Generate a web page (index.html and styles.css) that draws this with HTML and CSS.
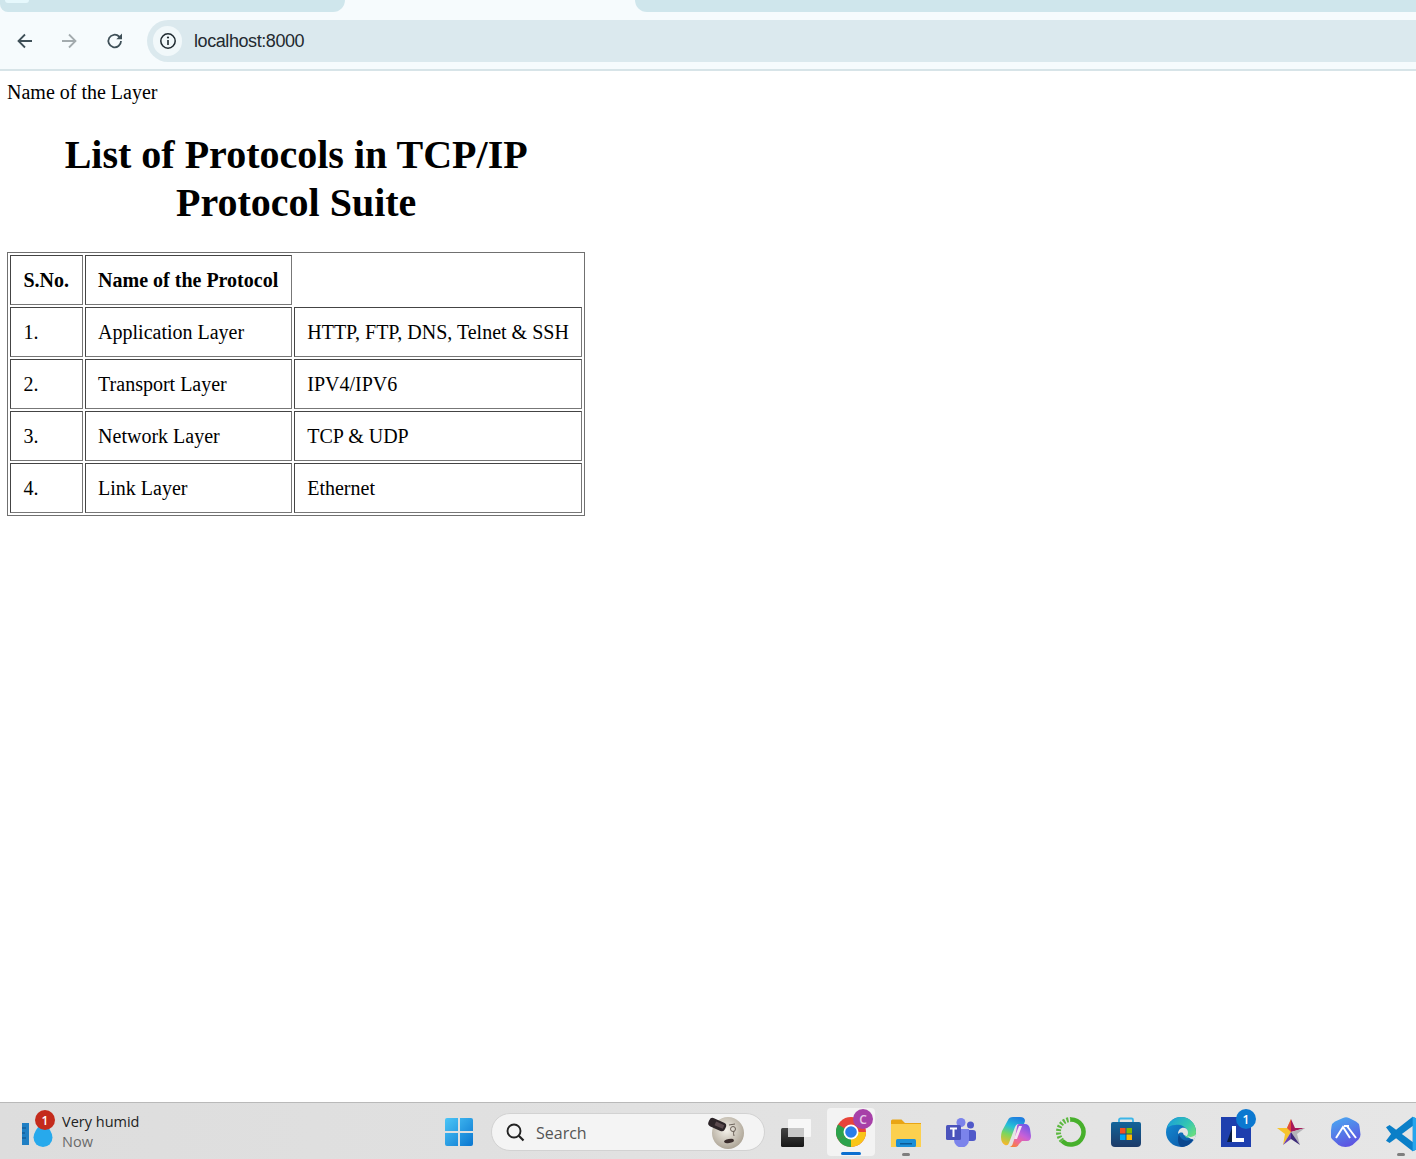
FILE: index.html
```html
<!DOCTYPE html>
<html lang="en">
<head>
    <meta charset="UTF-8">
    <title>List of Protocols</title>
    <link rel="stylesheet" href="styles.css">
</head>
<body>
    <div class="tabstrip">
        <div class="tab tab-left"><span class="tab-icon"></span></div>
        <div class="tab-active"></div>
        <div class="tab tab-right"></div>
    </div>
    <div class="toolbar">
        <button class="nav-button">
            <svg width="20" height="20" viewBox="0 0 20 20"><path d="M17 10H4M10 3.500L3.500 10l6.500 6.500" fill="none" stroke="#3f5058" stroke-width="1.800"/></svg>
        </button>
        <button class="nav-button">
            <svg width="20" height="20" viewBox="0 0 20 20"><path d="M3 10h13M10 3.500l6.500 6.500-6.500 6.500" fill="none" stroke="#a3abae" stroke-width="1.800"/></svg>
        </button>
        <button class="nav-button">
            <svg width="20" height="20" viewBox="0 0 20 20"><path d="M16 10a6.300 6.300 0 1 1-1.900-4.500L16 7.200" fill="none" stroke="#3f5058" stroke-width="1.800"/><path d="M17 2.500V8.200h-5.700z" fill="#3f5058"/></svg>
        </button>
        <div class="address-bar">
            <span class="site-chip">
                <svg width="18" height="18" viewBox="0 0 18 18"><circle cx="9" cy="9" r="7.200" fill="none" stroke="#1f2a30" stroke-width="1.500"/><path d="M9 8v5" stroke="#1f2a30" stroke-width="1.600"/><circle cx="9" cy="5.500" r="1.100" fill="#1f2a30"/></svg>
            </span>
            <span class="url">localhost:8000</span>
        </div>
    </div>

    <div class="page">
        <div class="layer-name">Name of the Layer</div>
        <table class="protocols">
            <caption><h1>List of Protocols in TCP/IP Protocol Suite</h1></caption>
            <tr>
                <th>S.No.</th>
                <th>Name of the Protocol</th>
            </tr>
            <tr>
                <td>1.</td>
                <td>Application Layer</td>
                <td>HTTP, FTP, DNS, Telnet &amp; SSH</td>
            </tr>
            <tr>
                <td>2.</td>
                <td>Transport Layer</td>
                <td>IPV4/IPV6</td>
            </tr>
            <tr>
                <td>3.</td>
                <td>Network Layer</td>
                <td>TCP &amp; UDP</td>
            </tr>
            <tr>
                <td>4.</td>
                <td>Link Layer</td>
                <td>Ethernet</td>
            </tr>
        </table>
    </div>

    <div class="taskbar">
        <div class="weather">
            <svg class="weather-icon" width="32" height="28" viewBox="0 0 32 28">
                <rect x="0" y="3" width="7" height="22" fill="#1f7fc4"/>
                <path d="M0 8h4M0 13h3M0 18h4" stroke="#0f4f86" stroke-width="1"/>
                <path d="M21 2q9 8 9.500 15.500a9.500 9.500 0 0 1-19 0Q12 10 21 2z" fill="#27a9ec"/>
            </svg>
            <span class="badge badge-red">1</span>
            <div class="weather-text">
                <div class="weather-title">Very humid</div>
                <div class="weather-time">Now</div>
            </div>
        </div>

        <div class="task-icon start-icon">
            <svg width="30" height="30" viewBox="0 0 30 30">
                <defs>
                    <linearGradient id="winBlue" x1="0" y1="0" x2="1" y2="1"><stop offset="0" stop-color="#4cc6f7"/><stop offset="1" stop-color="#0a76d0"/></linearGradient>
                </defs>
                <path d="M1 3a2 2 0 0 1 2-2h11v13H1zM16 1h11a2 2 0 0 1 2 2v11H16zM1 16h13v13H3a2 2 0 0 1-2-2zM16 16h13v11a2 2 0 0 1-2 2H16z" fill="url(#winBlue)"/>
            </svg>
        </div>

        <div class="search-box">
            <svg width="22" height="22" viewBox="0 0 22 22"><circle cx="10" cy="10" r="6.500" fill="none" stroke="#222" stroke-width="1.900"/><path d="M14.800 14.800l4.700 4.700" stroke="#222" stroke-width="2.200"/></svg>
            <span class="search-text">Search</span>
            <svg class="search-art" width="38" height="34" viewBox="0 0 38 34">
                <defs>
                    <radialGradient id="moon" cx="0.450" cy="0.400" r="0.650"><stop offset="0" stop-color="#f6f3ec"/><stop offset="1" stop-color="#a89f90"/></radialGradient>
                </defs>
                <circle cx="21" cy="18" r="16" fill="url(#moon)"/>
                <rect x="1" y="5" width="18" height="9" rx="3.500" transform="rotate(24 10 10)" fill="#2c2428"/>
                <rect x="8" y="8" width="9" height="4" transform="rotate(24 12 10)" fill="#5a4a4e"/>
                <circle cx="26" cy="14" r="2.500" fill="none" stroke="#6a6058" stroke-width="1"/>
                <path d="M22 10l6-1M27 21q-1-3 0-5" fill="none" stroke="#6a6058" stroke-width="1"/>
                <ellipse cx="22" cy="26" rx="5" ry="2" transform="rotate(-10 22 26)" fill="#3a2d2c"/>
            </svg>
        </div>

        <div class="task-icon">
            <svg width="30" height="30" viewBox="0 0 30 30">
                <defs>
                    <linearGradient id="viewFront" x1="0" y1="0" x2="0" y2="1"><stop offset="0" stop-color="#444"/><stop offset="1" stop-color="#161616"/></linearGradient>
                </defs>
                <rect x="7" y="2" width="23" height="18" rx="1" fill="#f7f7f7"/>
                <rect x="0" y="11" width="23" height="19" rx="1.500" fill="url(#viewFront)"/>
                <rect x="7" y="11" width="16" height="9" fill="#c8c8c8"/>
            </svg>
        </div>

        <div class="task-icon chrome-tile">
            <svg width="30" height="30" viewBox="0 0 30 30">
                <circle cx="15" cy="15" r="15" fill="#e8443a"/>
                <path d="M15 15L2 22.500A15 15 0 0 0 15 30z" fill="#2ca24c"/>
                <path d="M2 22.500A15 15 0 0 1 2 7.500L15 15z" fill="#2ca24c"/>
                <path d="M15 15h15A15 15 0 0 1 15 30z" fill="#f9c518"/>
                <circle cx="15" cy="15" r="7.500" fill="#fff"/>
                <circle cx="15" cy="15" r="5.800" fill="#2a7de8"/>
            </svg>
            <span class="badge badge-purple">C</span>
            <span class="running-bar"></span>
        </div>

        <div class="task-icon">
            <svg width="30" height="30" viewBox="0 0 30 30">
                <path d="M0 4a1.500 1.500 0 0 1 1.500-1.500h9L14 6h16v24H0z" fill="#e9a514"/>
                <rect x="0" y="7" width="30" height="23" fill="#fcd04f"/>
                <rect x="5" y="22" width="20" height="8" rx="1.500" fill="#1b8fd8"/>
                <rect x="9" y="26" width="12" height="1.500" fill="#0b5a96"/>
            </svg>
            <span class="pinned-dot"></span>
        </div>

        <div class="task-icon">
            <svg width="30" height="30" viewBox="0 0 30 30">
                <circle cx="24.500" cy="8" r="3.500" fill="#5059c9"/>
                <rect x="20" y="13" width="10" height="11" rx="3" fill="#5059c9"/>
                <circle cx="15" cy="5.500" r="4.500" fill="#7b83eb"/>
                <path d="M8 12h15v11a7.500 7.500 0 0 1-15 0z" fill="#7b83eb"/>
                <rect x="0" y="8" width="15" height="15" rx="1.500" fill="#4b53bc"/>
                <path d="M4 11.500h7M7.500 11.500v8.500" stroke="#fff" stroke-width="2"/>
            </svg>
        </div>

        <div class="task-icon">
            <svg width="30" height="30" viewBox="0 0 30 30">
                <defs>
                    <linearGradient id="copA" x1="0.600" y1="0" x2="0.300" y2="1"><stop offset="0" stop-color="#1f7fe0"/><stop offset="0.350" stop-color="#25c0d8"/><stop offset="0.650" stop-color="#7ed65a"/><stop offset="1" stop-color="#f5b82c"/></linearGradient>
                    <linearGradient id="copB" x1="0.800" y1="0" x2="0.200" y2="1"><stop offset="0" stop-color="#6a58e8"/><stop offset="0.450" stop-color="#c860d8"/><stop offset="0.750" stop-color="#f06a90"/><stop offset="1" stop-color="#f5803a"/></linearGradient>
                </defs>
                <path d="M12 0h7q5 0 5 4l-1 3h-5q-3 0-4 3l-6 16q-1 3-4 2-4-2-4-8 0-3 1-6l6-11q1-3 5-3z" fill="url(#copA)"/>
                <path d="M18 7h6q4 0 5 5l1 7q0 5-4 5h-5l-3 3q-1 3-4 3H8q3 0 4-4l2-6 2-10q0-3 2-3z" fill="url(#copB)"/>
                <path d="M18 9l-5 13h3l5-13z" fill="#f7e4f2"/>
            </svg>
        </div>

        <div class="task-icon">
            <svg width="30" height="30" viewBox="0 0 30 30">
                <path d="M15 2.500A12.500 12.500 0 1 1 6 23.700" fill="none" stroke="#47b02c" stroke-width="4.500"/>
                <path d="M6 23.700A12.500 12.500 0 0 1 15 2.500" fill="none" stroke="#5cb840" stroke-width="5" stroke-dasharray="2 1.500"/>
            </svg>
        </div>

        <div class="task-icon">
            <svg width="30" height="30" viewBox="0 0 30 30">
                <defs>
                    <linearGradient id="storeBg" x1="0" y1="0" x2="0" y2="1"><stop offset="0" stop-color="#12649a"/><stop offset="1" stop-color="#1d3a68"/></linearGradient>
                </defs>
                <path d="M8 6V3a1.500 1.500 0 0 1 1.500-1.500h11A1.500 1.500 0 0 1 22 3v3" fill="none" stroke="#3cb6e8" stroke-width="1.800"/>
                <path d="M0 7a2 2 0 0 1 2-2h26a2 2 0 0 1 2 2v19a4 4 0 0 1-4 4H4a4 4 0 0 1-4-4z" fill="url(#storeBg)"/>
                <rect x="9" y="11" width="5.500" height="5.500" fill="#f25022"/>
                <rect x="15.500" y="11" width="5.500" height="5.500" fill="#7fba00"/>
                <rect x="9" y="17.500" width="5.500" height="5.500" fill="#00a4ef"/>
                <rect x="15.500" y="17.500" width="5.500" height="5.500" fill="#ffb900"/>
            </svg>
        </div>

        <div class="task-icon">
            <svg width="30" height="30" viewBox="0 0 30 30">
                <defs>
                    <linearGradient id="edgeTop" x1="0" y1="0.200" x2="1" y2="0.800"><stop offset="0" stop-color="#1b9fd8"/><stop offset="0.600" stop-color="#35c8b0"/><stop offset="1" stop-color="#6ee07c"/></linearGradient>
                    <linearGradient id="edgeLow" x1="0" y1="0" x2="1" y2="1"><stop offset="0" stop-color="#1490d8"/><stop offset="1" stop-color="#0c4f9e"/></linearGradient>
                </defs>
                <circle cx="15" cy="15" r="15" fill="url(#edgeLow)"/>
                <path d="M1 11C3 4 9 0 15 0c8 0 15 6 15 15 0 3-2 6-6 6-3 0-5-1-5-2 2-1 3-3 2-6-2-4-7-6-12-5-4 0-7 2-8 3z" fill="url(#edgeTop)"/>
                <path d="M12 17c0-4 3-7 7-6 3 1 4 5 2 8-2 0-4-1-4-3-2-1-4 0-5 1z" fill="#e3e3e3"/>
                <path d="M21 19c2 1 6 2 9-2 0 2-1 4-2 6-3-1-5-2-7-4z" fill="#e3e3e3"/>
                <path d="M13 17c1 5 6 8 11 6 1 0 2-1 3-1-2 4-6 8-11 8-4-1-5-8-3-13z" fill="#0b478f"/>
            </svg>
        </div>

        <div class="task-icon">
            <svg width="30" height="30" viewBox="0 0 30 30">
                <rect width="30" height="30" fill="#1e3fae"/>
                <path d="M11 9h4v12h8v4H11z" fill="#fff"/>
                <path d="M11 11v14H6z" fill="#0a1d40"/>
            </svg>
            <span class="badge badge-blue">1</span>
        </div>

        <div class="task-icon">
            <svg width="30" height="30" viewBox="0 0 30 30">
                <path d="M15 2l-4 9H1l8 6-2 11 8-13z" fill="#f6c42c"/>
                <path d="M15 2l4 9h10l-14 4z" fill="#a8185a"/>
                <path d="M29 11l-8 6 3 11-9-13z" fill="#b4b4b8"/>
                <path d="M15 15l9 13-9-6z" fill="#3c2a78"/>
                <path d="M15 15v7l-8 6z" fill="#6a3fb0"/>
                <path d="M15 2v13l-4-4z" fill="#e04a3c"/>
            </svg>
        </div>

        <div class="task-icon">
            <svg width="30" height="30" viewBox="0 0 30 30">
                <defs>
                    <linearGradient id="hexBg" x1="0.300" y1="0" x2="0.700" y2="1"><stop offset="0" stop-color="#4aa4f0"/><stop offset="1" stop-color="#5f4fe0"/></linearGradient>
                </defs>
                <path d="M12 1q3-1.500 6 0l7 3.500q3 1.500 3.500 5l1 8q0 3-2 5l-6 5.500q-3 2-7 2t-7-2l-6-5.500q-2-2-2-5l1-8q.5-3.500 3.500-5z" fill="url(#hexBg)"/>
                <path d="M5 21l7-11 7 11M16 9l9 12M18 9h-5" fill="none" stroke="#fff" stroke-width="2"/>
            </svg>
        </div>

        <div class="task-icon">
            <svg class="vscode-logo" width="36" height="36" viewBox="0 0 100 100">
                <path d="M74 2L28 38 10 25 0 31l14 19L0 69l10 6 18-13 46 36 26-12V14z" fill="#0a7fc8"/>
                <path d="M74 2l26 12v72L74 98z" fill="#25a5ee"/>
                <path d="M74 28L44 50l30 22z" fill="#e4e4e4"/>
            </svg>
            <span class="pinned-dot"></span>
        </div>
    </div>
</body>
</html>
```

FILE: styles.css
```css
html, body {
    margin: 0;
    height: 100%;
}
body {
    display: flex;
    flex-direction: column;
    height: 1159px;
    overflow: hidden;
    background-color: white;
    font-family: "Liberation Serif", serif;
    color: black;
}

/* browser chrome */
.tabstrip {
    display: flex;
    height: 12px;
    background-color: #f6fbfd;
}
.tab {
    background-color: #cfe6ec;
}
.tab-left {
    width: 345px;
    border-radius: 0 0 12px 8px;
}
.tab-icon {
    display: block;
    width: 24px;
    height: 3px;
    margin-left: 5px;
    background-color: #e6f8fc;
    border-radius: 0 0 6px 6px;
}
.tab-active {
    width: 290px;
}
.tab-right {
    flex: 1;
    border-radius: 0 0 0 12px;
}
.toolbar {
    display: flex;
    align-items: center;
    height: 57px;
    padding-left: 3px;
    background-color: #f6fbfd;
    border-bottom: 2px solid #d7e4e8;
}
.nav-button {
    display: flex;
    align-items: center;
    justify-content: center;
    width: 44px;
    height: 36px;
    padding: 0;
    border: none;
    background: none;
}
.nav-button:nth-child(3) {
    margin-left: 2px;
}
.address-bar {
    display: flex;
    align-items: center;
    flex: 1;
    height: 42px;
    margin-left: 10px;
    padding-left: 6px;
    margin-top: 1px;
    background-color: #dbe9ee;
    border-radius: 21px 0 0 21px;
}
.site-chip {
    display: flex;
    align-items: center;
    justify-content: center;
    width: 29px;
    height: 30px;
    background-color: #f1f8fa;
    border-radius: 15px;
}
.url {
    margin-left: 12px;
    font-family: "Liberation Sans", sans-serif;
    font-size: 18px;
    letter-spacing: -0.42px;
    color: #1f2a30;
}

/* page content */
.page {
    flex: 1;
    padding: 10px 7px 0;
}
.layer-name {
    font-size: 20px;
    line-height: 23px;
}
.protocols {
    border: 1px solid #707070;
    border-spacing: 2px;
    font-size: 20px;
}
.protocols caption h1 {
    margin: 27px 0 25px;
    font-size: 40px;
    line-height: 48px;
}
.protocols th,
.protocols td {
    padding: 13px 12.5px;
    border: 1px solid #444;
    border-right-color: #777;
    border-bottom-color: #777;
    text-align: left;
    line-height: 22px;
}

/* windows taskbar */
.taskbar {
    position: relative;
    display: flex;
    align-items: center;
    flex-shrink: 0;
    box-sizing: border-box;
    height: 57px;
    padding-top: 2px;
    overflow: hidden;
    background: linear-gradient(to right, #dddddd, #e6e6e6);
    border-top: 1px solid #b9b9b9;
    font-family: "Open Sans", sans-serif;
}
.weather {
    display: flex;
    align-items: center;
    width: 444px;
    padding-left: 22px;
    flex-shrink: 0;
    box-sizing: border-box;
}
.weather-icon {
    margin-top: 4px;
    flex-shrink: 0;
}
.weather-text {
    margin-left: 8px;
    font-size: 14.5px;
    line-height: 20px;
}
.weather-title {
    color: #222;
}
.weather-time {
    color: #6a6a6a;
}
.task-icon {
    position: relative;
    flex-shrink: 0;
    display: flex;
    width: 30px;
    height: 30px;
    margin-right: 25px;
}
.start-icon {
    margin-right: 17px;
}
.search-box {
    display: flex;
    align-items: center;
    flex-shrink: 0;
    box-sizing: border-box;
    width: 274px;
    height: 38px;
    margin-right: 16px;
    padding-left: 12px;
    background-color: #f4f4f4;
    border: 1px solid #d2d2d2;
    border-radius: 19px;
}
.search-text {
    margin-left: 10px;
    margin-top: 2px;
    font-size: 16px;
    color: #555;
}
.search-art {
    margin-left: auto;
    margin-right: 19px;
}
.chrome-tile::before {
    content: "";
    position: absolute;
    left: -9px;
    top: -9px;
    width: 48px;
    height: 48px;
    background-color: #f3f3f3;
    border-radius: 4px;
}
.task-icon svg {
    position: relative;
}
.vscode-logo {
    flex-shrink: 0;
    margin-top: -1px;
}
.badge {
    position: absolute;
    display: flex;
    align-items: center;
    justify-content: center;
    width: 20px;
    height: 20px;
    border-radius: 50%;
    color: white;
    font-family: "Open Sans", sans-serif;
    font-size: 12px;
    font-weight: 600;
}
.badge-red {
    left: 35px;
    top: 7px;
    background-color: #c42b1c;
}
.badge-purple {
    right: -7px;
    top: -8px;
    background-color: #a740a8;
    color: #e5c8e8;
}
.badge-blue {
    right: -5px;
    top: -8px;
    background-color: #0b78d0;
}
.running-bar {
    position: absolute;
    left: 5px;
    top: 35px;
    width: 20px;
    height: 3px;
    background-color: #0a6fd0;
    border-radius: 2px;
}
.pinned-dot {
    position: absolute;
    left: 11px;
    top: 36px;
    width: 8px;
    height: 3px;
    background-color: #7e7e7e;
    border-radius: 2px;
}
```
